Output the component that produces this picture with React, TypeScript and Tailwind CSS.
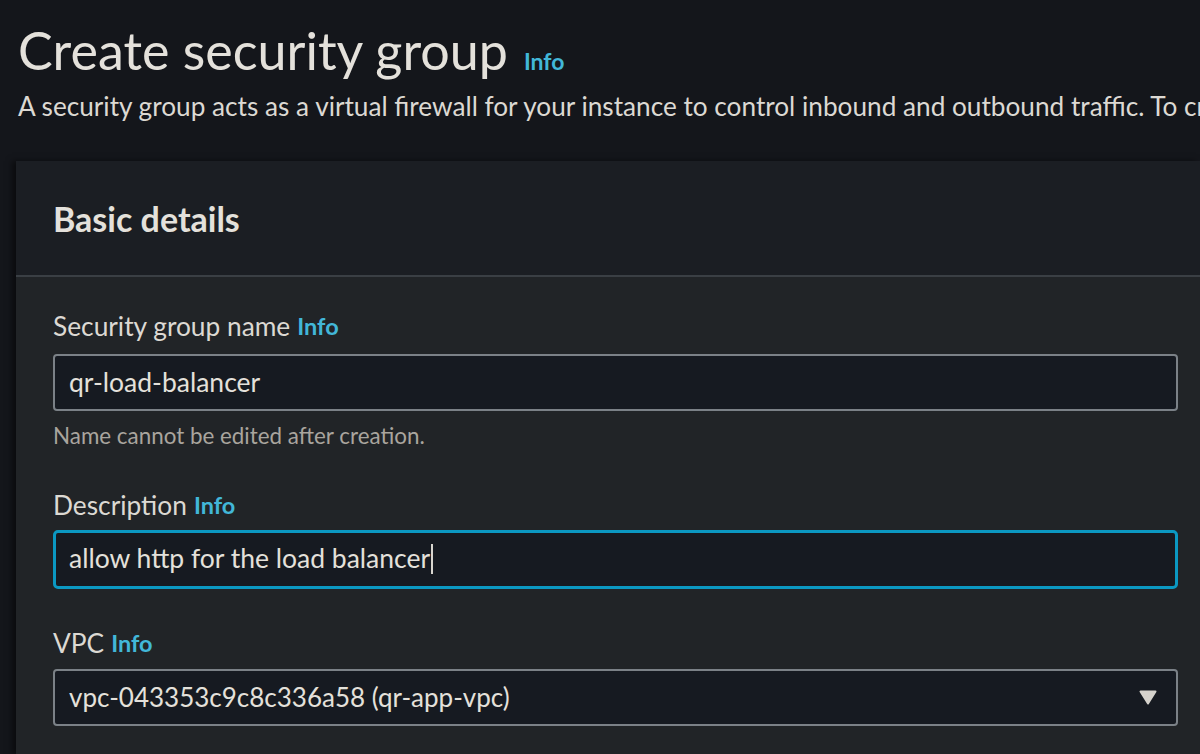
const font = { fontFamily: 'Lato, "Open Sans", sans-serif' }

function InfoLink({ className = '' }: { className?: string }) {
  return <span className={`font-bold text-[#42b7d8] ${className}`}>Info</span>
}

function Field({
  label,
  children,
  hint
}: {
  label: string
  children: React.ReactNode
  hint?: string
}) {
  return (
    <div>
      <div className="h-[36px] flex items-center text-[26.3px] text-[#dcd9d3]">
        <span>{label}</span>
        <InfoLink className="ml-[7px] text-[23.5px]" />
      </div>
      {children}
      {hint && <p className="mt-[8px] text-[22.4px] text-[#a9a59e]">{hint}</p>}
    </div>
  )
}

export default function App() {
  return (
    <div
      className="w-[1200px] h-[754px] overflow-hidden bg-[#14161b] flex flex-col"
      style={font}
    >
      {/* Page header */}
      <div className="pl-[18px] pt-[18px]">
        <h1 className="flex items-baseline text-[52px] leading-[64px] text-[#e4e1db]">
          Create security group
          <InfoLink className="ml-[16px] text-[23px]" />
        </h1>
        <p className="-mt-[3px] leading-[32px] whitespace-nowrap text-[26.2px] text-[#dcd9d3]">
          A security group acts as a virtual firewall for your instance to control inbound and outbound traffic. To create
        </p>
      </div>

      {/* Card */}
      <div className="mt-[39px] ml-[16px] flex-1 bg-[#1b1e23] shadow-[-4px_0_6px_rgba(0,0,0,0.5)]">
        <div className="h-[114px] px-[37px] flex items-center">
          <h2 className="text-[34px] font-bold text-[#e4e1db]">Basic details</h2>
        </div>
        <div className="h-[2px] bg-[#3a3f44]" />
        <div className="bg-[#212427] h-full pl-[37px] pr-[22px] pt-[32px] flex flex-col">
          <Field label="Security group name" hint="Name cannot be edited after creation.">
            <div className="mt-[9px] h-[57px] rounded-[4px] border-2 border-[#7b8187] bg-[#161a21] px-[14px] flex items-center text-[26.5px] text-[#e4e1db]">
              qr-load-balancer
            </div>
          </Field>

          <div className="mt-[35px]">
            <Field label="Description">
              <div className="mt-[6px] h-[59px] rounded-[5px] border-[3px] border-[#0b98c2] bg-[#161a21] px-[13px] flex items-center text-[26.5px] text-[#e4e1db]">
                allow http for the load balancer
                <span className="ml-[1px] w-[2px] h-[30px] bg-[#d8d5cf]" />
              </div>
            </Field>
          </div>

          <div className="mt-[37px]">
            <Field label="VPC">
              <div className="mt-[7px] h-[57px] rounded-[4px] border-2 border-[#7b8187] bg-[#161a21] pl-[14px] pr-[18px] flex items-center justify-between text-[26px] text-[#e4e1db]">
                <span>vpc-043353c9c8c336a58 (qr-app-vpc)</span>
                <svg width="20" height="16" viewBox="0 0 20 16">
                  <path d="M2.5 2.5h15L10 14.5z" fill="#d5d2cc" stroke="#d5d2cc" strokeWidth="2" strokeLinejoin="round" />
                </svg>
              </div>
            </Field>
          </div>
        </div>
      </div>
    </div>
  )
}
